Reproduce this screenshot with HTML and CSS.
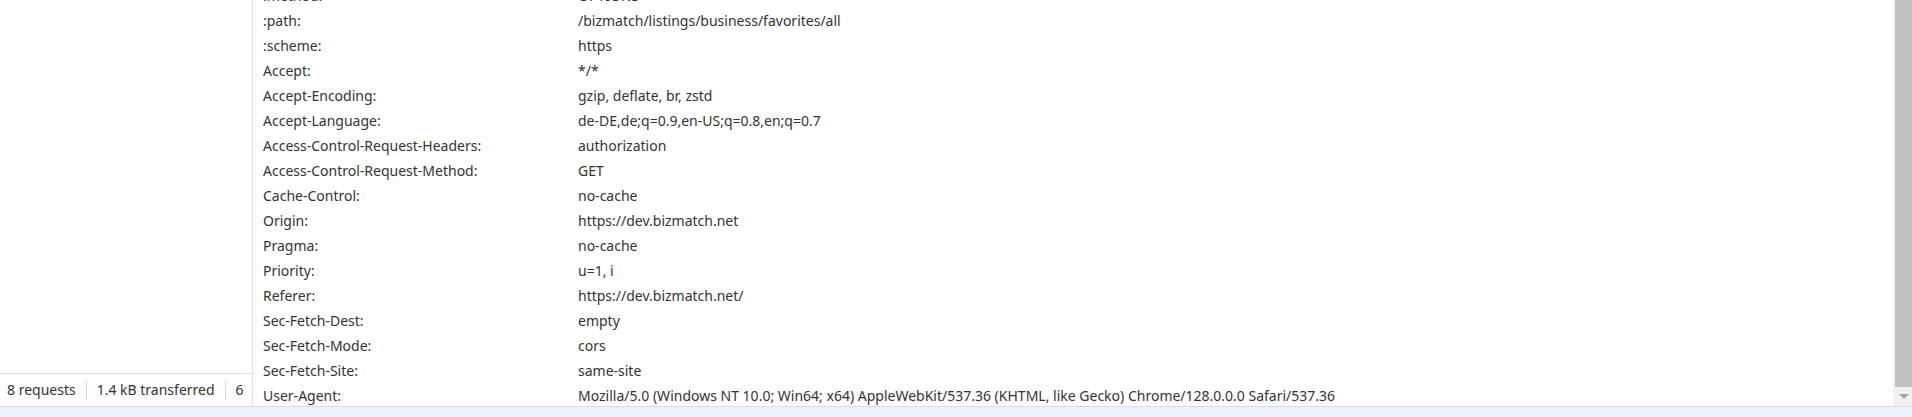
FILE: index.html
```html
<!DOCTYPE html>
<html>
<head>
<meta charset="utf-8">
<link rel="stylesheet" href="styles.css">
</head>
<body>
<div class="app">
  <div class="main">
    <div class="left">
      <div class="spacer"></div>
      <div class="status">
        <div class="status-items">
          <span class="item first">8 requests</span>
          <span class="item">1.4 kB transferred</span>
          <span class="item">6 kB resources</span>
        </div>
      </div>
    </div>
    <div class="right">
      <div class="headers">
        <div class="list">
          <div class="k">:method:</div><div class="v">OPTIONS</div>
          <div class="k">:path:</div><div class="v">/bizmatch/listings/business/favorites/all</div>
          <div class="k">:scheme:</div><div class="v">https</div>
          <div class="k">Accept:</div><div class="v">*/*</div>
          <div class="k">Accept-Encoding:</div><div class="v">gzip, deflate, br, zstd</div>
          <div class="k">Accept-Language:</div><div class="v">de-DE,de;q=0.9,en-US;q=0.8,en;q=0.7</div>
          <div class="k">Access-Control-Request-Headers:</div><div class="v">authorization</div>
          <div class="k">Access-Control-Request-Method:</div><div class="v">GET</div>
          <div class="k">Cache-Control:</div><div class="v">no-cache</div>
          <div class="k">Origin:</div><div class="v">https://dev.bizmatch.net</div>
          <div class="k">Pragma:</div><div class="v">no-cache</div>
          <div class="k">Priority:</div><div class="v">u=1, i</div>
          <div class="k">Referer:</div><div class="v">https://dev.bizmatch.net/</div>
          <div class="k">Sec-Fetch-Dest:</div><div class="v">empty</div>
          <div class="k">Sec-Fetch-Mode:</div><div class="v">cors</div>
          <div class="k">Sec-Fetch-Site:</div><div class="v">same-site</div>
          <div class="k">User-Agent:</div><div class="v">Mozilla/5.0 (Windows NT 10.0; Win64; x64) AppleWebKit/537.36 (KHTML, like Gecko) Chrome/128.0.0.0 Safari/537.36</div>
        </div>
      </div>
      <div class="scrollbar">
        <div class="thumb"></div>
        <div class="arrow"><span class="tri"></span></div>
      </div>
    </div>
  </div>
  <div class="bottom"></div>
</div>
</body>
</html>
```
FILE: styles.css
```css
html, body {
  margin: 0;
  padding: 0;
  background: #ffffff;
}
body {
  width: 1912px;
  height: 417px;
  overflow: hidden;
  font-family: "Noto Sans", "Open Sans", "DejaVu Sans", sans-serif;
  font-size: 14px;
  color: #333333;
}
.app {
  display: flex;
  flex-direction: column;
  height: 417px;
}
.main {
  display: flex;
  height: 406px;
  border-bottom: 1px solid #d3ddef;
}
.left {
  width: 252px;
  border-right: 1px solid #d3ddef;
  display: flex;
  flex-direction: column;
}
.spacer {
  flex: 1;
}
.status {
  height: 32px;
  border-top: 1px solid #d3ddef;
  display: flex;
  align-items: center;
}
.status-items {
  display: flex;
  align-items: center;
  white-space: nowrap;
  overflow: hidden;
  margin-right: 9px;
  min-width: 0;
}
.item {
  padding: 0 10px;
  line-height: 20px;
  border-left: 1px solid #d3ddef;
}
.item.first {
  padding-left: 7px;
  border-left: none;
}
.right {
  flex: 1;
  display: flex;
  min-width: 0;
}
.headers {
  flex: 1;
  overflow: hidden;
  padding-left: 10px;
}
.list {
  display: grid;
  grid-template-columns: 315px 1fr;
  grid-auto-rows: 25px;
  margin-top: -17px;
  white-space: nowrap;
}
.k, .v {
  line-height: 25px;
}
.scrollbar {
  width: 19px;
  background: #f1f1f1;
  display: flex;
  flex-direction: column;
}
.thumb {
  flex: 1;
  margin-left: 2px;
  background: #c1c1c1;
}
.arrow {
  height: 19px;
  display: flex;
  align-items: center;
  justify-content: center;
  padding-left: 2px;
}
.tri {
  width: 0;
  height: 0;
  border-left: 5px solid transparent;
  border-right: 5px solid transparent;
  border-top: 5px solid #a3a3a3;
}
.bottom {
  flex: 1;
  background: #edf1fa;
}
```
